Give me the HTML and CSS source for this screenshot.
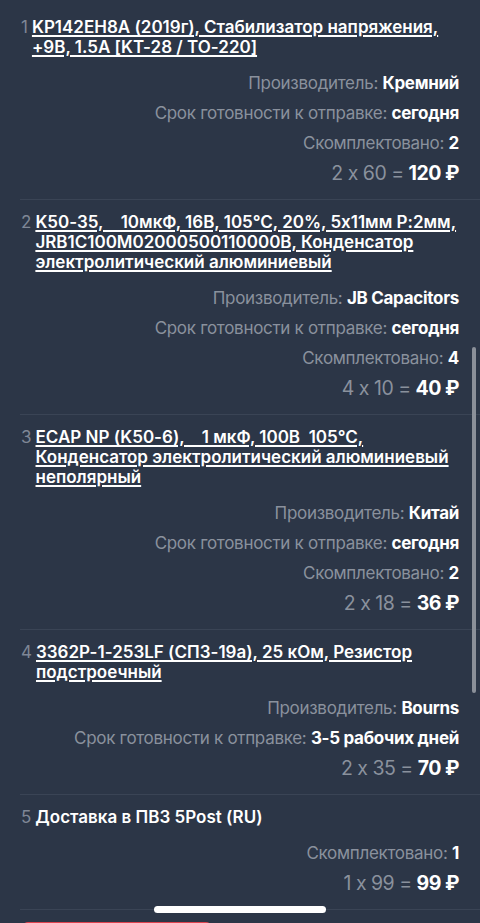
FILE: index.html
```html
<!DOCTYPE html>
<html lang="ru">
<head>
<meta charset="utf-8">
<title>Заказ</title>
<link rel="stylesheet" href="styles.css">
</head>
<body>
<div class="list">
  <div class="item">
    <div class="head"><span class="num">1</span><a class="title" href="#">KP142EH8A (2019г), Стабилизатор напряжения, +9В, 1.5А [KT-28 / TO-220]</a></div>
    <div class="meta">
      <div class="row"><span class="lbl">Производитель:</span> <b>Кремний</b></div>
      <div class="row"><span class="lbl">Срок готовности к отправке:</span> <b>сегодня</b></div>
      <div class="row"><span class="lbl">Скомплектовано:</span> <b>2</b></div>
      <div class="price"><span class="lbl">2 x 60 =</span> <b>120 ₽</b></div>
    </div>
  </div>
  <div class="item">
    <div class="head"><span class="num">2</span><a class="title" href="#">K50-35,&nbsp;&nbsp;&nbsp; 10мкФ, 16В, 105°С, 20%, 5x11мм P:2мм, JRB1C100M02000500110000B, Конденсатор электролитический алюминиевый</a></div>
    <div class="meta">
      <div class="row"><span class="lbl">Производитель:</span> <b>JB Capacitors</b></div>
      <div class="row"><span class="lbl">Срок готовности к отправке:</span> <b>сегодня</b></div>
      <div class="row"><span class="lbl">Скомплектовано:</span> <b>4</b></div>
      <div class="price"><span class="lbl">4 x 10 =</span> <b>40 ₽</b></div>
    </div>
  </div>
  <div class="item">
    <div class="head"><span class="num">3</span><a class="title" href="#">ECAP NP (K50-6),&nbsp;&nbsp;&nbsp; 1 мкФ, 100В&nbsp; 105°С, Конденсатор электролитический алюминиевый неполярный</a></div>
    <div class="meta">
      <div class="row"><span class="lbl">Производитель:</span> <b>Китай</b></div>
      <div class="row"><span class="lbl">Срок готовности к отправке:</span> <b>сегодня</b></div>
      <div class="row"><span class="lbl">Скомплектовано:</span> <b>2</b></div>
      <div class="price"><span class="lbl">2 x 18 =</span> <b>36 ₽</b></div>
    </div>
  </div>
  <div class="item">
    <div class="head"><span class="num">4</span><a class="title" href="#">3362P-1-253LF (СП3-19а), 25 кОм, Резистор подстроечный</a></div>
    <div class="meta">
      <div class="row"><span class="lbl">Производитель:</span> <b>Bourns</b></div>
      <div class="row"><span class="lbl">Срок готовности к отправке:</span> <b>3-5 рабочих дней</b></div>
      <div class="price"><span class="lbl">2 x 35 =</span> <b>70 ₽</b></div>
    </div>
  </div>
  <div class="item">
    <div class="head"><span class="num">5</span><span class="title plain">Доставка в ПВЗ 5Post (RU)</span></div>
    <div class="meta">
      <div class="row"><span class="lbl">Скомплектовано:</span> <b>1</b></div>
      <div class="price"><span class="lbl">1 x 99 =</span> <b>99 ₽</b></div>
    </div>
  </div>
  <div class="actions"><div class="btn-red"></div></div>
</div>
<div class="scrollbar"></div>
<div class="home"></div>
</body>
</html>
```

FILE: styles.css
```css
html, body {
  margin: 0;
  padding: 0;
  background: #2c3647;
  height: 100%;
  overflow: hidden;
}
body {
  font-family: Inter, "Noto Sans", "DejaVu Sans", sans-serif;
  font-feature-settings: "calt" 0;
  color: #ffffff;
  -webkit-font-smoothing: antialiased;
}
.list {
  padding-top: 5px;
}
.item {
  margin-left: 20px;
  padding: 12px 21px 10px 0;
  border-bottom: 1px solid #3a4455;
}
.head {
  display: flex;
  gap: 4px;
  font-size: 17px;
  line-height: 20px;
}
.num {
  color: #7f8796;
  padding-left: 1px;
  flex: none;
}
.title {
  color: #ffffff;
  font-weight: 600;
  text-decoration: underline;
  text-decoration-thickness: 1.5px;
  text-underline-offset: 2px;
}
.title.plain {
  text-decoration: none;
}
.meta {
  margin-top: 11px;
  display: flex;
  flex-direction: column;
  align-items: flex-end;
}
.row {
  font-size: 17px;
  line-height: 30px;
  letter-spacing: -0.3px;
  white-space: nowrap;
}
.price {
  font-size: 19.5px;
  line-height: 31px;
  letter-spacing: -0.5px;
  white-space: nowrap;
}
.lbl {
  color: #8a919d;
}
b {
  font-weight: 700;
  color: #ffffff;
}
.actions {
  padding: 12px 0 0 22px;
}
.btn-red {
  width: 190px;
  height: 20px;
  background: #e0434f;
  border-radius: 6px 6px 0 0;
}
.scrollbar {
  position: absolute;
  left: 472px;
  top: 347px;
  width: 4px;
  height: 346px;
  border-radius: 2px;
  background: #8b9099;
}
.home {
  position: absolute;
  left: 154px;
  top: 906px;
  width: 172px;
  height: 7px;
  border-radius: 4px;
  background: #ffffff;
}
```
